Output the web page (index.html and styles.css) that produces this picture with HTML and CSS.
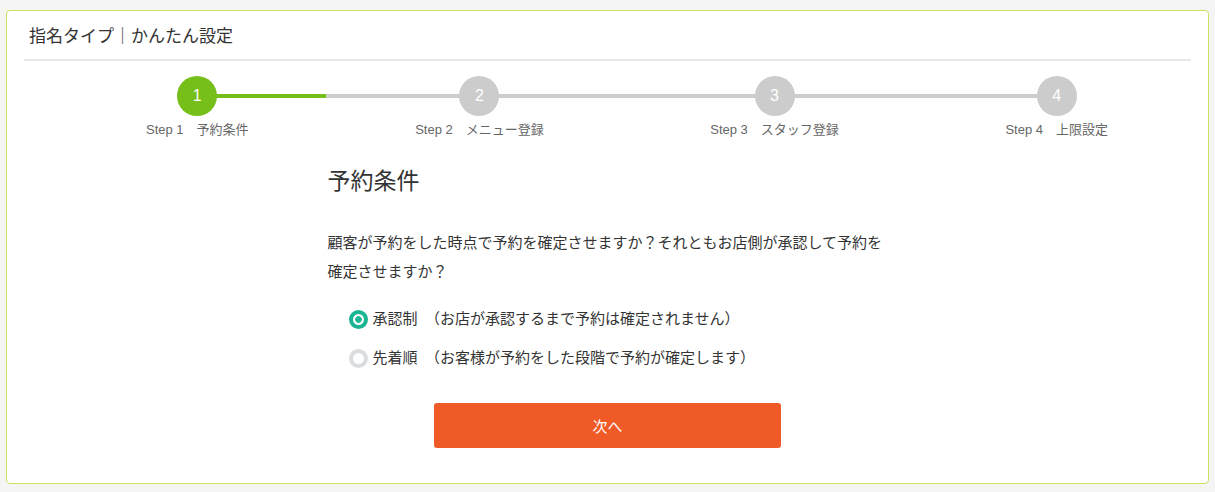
FILE: index.html
```html
<!DOCTYPE html>
<html>
<head>
    <link rel="stylesheet" href="styles.css">
</head>
<body>
    <div class="card">
        <h1 class="card-title">指名タイプ｜かんたん設定</h1>

        <div class="stepper">
            <div class="track"><div class="track-fill"></div></div>
            <div class="step active">
                <div class="step-num">1</div>
                <div class="step-label">Step 1　予約条件</div>
            </div>
            <div class="step">
                <div class="step-num">2</div>
                <div class="step-label">Step 2　メニュー登録</div>
            </div>
            <div class="step">
                <div class="step-num">3</div>
                <div class="step-label">Step 3　スタッフ登録</div>
            </div>
            <div class="step">
                <div class="step-num">4</div>
                <div class="step-label">Step 4　上限設定</div>
            </div>
        </div>

        <div class="content">
            <h2>予約条件</h2>
            <p class="question">顧客が予約をした時点で予約を確定させますか？それともお店側が承認して予約を確定させますか？</p>

            <div class="options">
                <label class="option">
                    <input type="radio" name="type" checked>
                    <span>承認制　（お店が承認するまで予約は確定されません）</span>
                </label>
                <label class="option">
                    <input type="radio" name="type">
                    <span>先着順　（お客様が予約をした段階で予約が確定します）</span>
                </label>
            </div>

            <button class="next">次へ</button>
        </div>
    </div>
</body>
</html>
```

FILE: styles.css
```css
body {
    margin: 0;
    padding: 10px 6px 8px;
    background-color: #f5f5f5;
    font-family: "Liberation Sans", "Noto Sans CJK JP", sans-serif;
    color: #333;
}

.card {
    background-color: #fff;
    border: 1px solid #cfe05e;
    border-radius: 4px;
    padding: 0 17px 35px;
}

.card-title {
    margin: 0;
    padding: 12px 5px 8px;
    font-size: 17px;
    font-weight: normal;
    line-height: 28px;
    border-bottom: 2px solid #e6e8eb;
}

.stepper {
    position: relative;
    display: flex;
    justify-content: space-between;
    margin: 15px 83px 0 122px;
}

.track {
    position: absolute;
    top: 18px;
    left: 52px;
    right: 51px;
    height: 4px;
    background-color: #cccccc;
}

.track-fill {
    width: 128px;
    height: 100%;
    background-color: #76be1a;
}

.step {
    position: relative;
    display: flex;
    flex-direction: column;
    align-items: center;
}

.step-num {
    width: 40px;
    height: 40px;
    border-radius: 50%;
    background-color: #cccccc;
    color: #fff;
    font-size: 16px;
    line-height: 40px;
    text-align: center;
}

.step.active .step-num {
    background-color: #76be1a;
}

.step-label {
    margin-top: 5px;
    font-size: 13px;
    line-height: 18px;
    color: #666;
    white-space: nowrap;
}

.content {
    width: 560px;
    margin: 26px auto 0;
}

h2 {
    margin: 0;
    font-size: 23px;
    font-weight: normal;
    line-height: 32px;
}

.question {
    margin: 31px 0 0;
    font-size: 15px;
    line-height: 29px;
}

.options {
    display: flex;
    flex-direction: column;
    gap: 15px;
    margin: 21px 0 0 21px;
}

.option {
    display: flex;
    align-items: center;
    gap: 5px;
    font-size: 15px;
    line-height: 24px;
    cursor: pointer;
}

.option input {
    appearance: none;
    margin: 0;
    width: 19px;
    height: 19px;
    border: 4px solid #d9dde0;
    border-radius: 50%;
    background-color: #fff;
}

.option input:checked {
    border-color: #1cb593;
    background: radial-gradient(circle, #1cb593 0 3px, #fff 3.5px);
}

.next {
    display: block;
    width: 347px;
    height: 45px;
    margin: 33px auto 0;
    border: none;
    border-radius: 3px;
    background-color: #f05a26;
    color: #fff;
    font-family: inherit;
    font-size: 15px;
    cursor: pointer;
}
```
